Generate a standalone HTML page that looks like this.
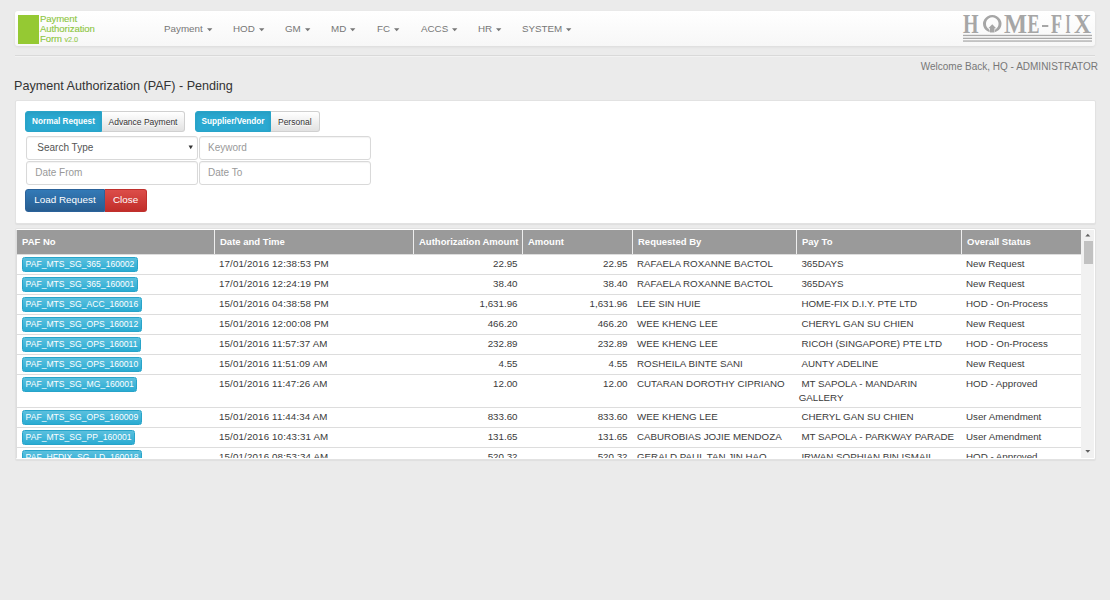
<!DOCTYPE html>
<html><head><meta charset="utf-8">
<style>
*{box-sizing:border-box;margin:0;padding:0}
html,body{width:1110px;height:600px;overflow:hidden;background:#ebebeb;font-family:"Liberation Sans",sans-serif;color:#333}
.a{position:absolute;white-space:nowrap}
.nav{position:absolute;left:15px;top:11px;width:1080px;height:35px;background:linear-gradient(#fff,#f7f7f7);border-radius:3px;box-shadow:0 1px 3px rgba(0,0,0,.07)}
.logo-sq{position:absolute;left:18px;top:15px;width:21px;height:29px;background:#95c933}
.logo-t{position:absolute;left:40px;top:13.7px;font-size:9.6px;line-height:10px;color:#8cc640;letter-spacing:-.1px;-webkit-text-stroke:.1px #8cc640}
.menu span{position:absolute;top:21.5px;font-size:9.8px;color:#777;white-space:nowrap;line-height:14px}
.caret{display:inline-block;margin-left:4.2px;vertical-align:middle;position:relative;top:0.6px}
.hr{position:absolute;left:15px;top:55px;width:1080px;height:1px;background:#d9d9d9;box-shadow:0 1px 0 #f2f2f2}
.welcome{position:absolute;right:12px;top:59.5px;font-size:10px;color:#777;line-height:14px}
h1{position:absolute;left:14px;top:79.2px;font-size:12.6px;line-height:15px;font-weight:normal;color:#333;white-space:nowrap}
.panel{position:absolute;left:14.5px;width:1081px;background:#fff;border-radius:2px;border:1px solid #e2e2e2;box-shadow:0 1px 1px rgba(0,0,0,.05)}
.btn{position:absolute;height:20.5px;line-height:20px;font-size:8.5px;text-align:center;white-space:nowrap;border:1px solid #d0d0d0;color:#333}
.bdef{background:linear-gradient(#fff,#e2e2e2);text-shadow:0 1px 0 #fff}
.binfo{background:#2aa9d1;border-color:#28a4c9;color:#fff;font-weight:bold;font-size:8.2px;box-shadow:inset 0 2px 4px rgba(0,0,0,.08)}
.inp{position:absolute;height:23.5px;border:1px solid #d9d9d9;border-radius:3px;background:#fff;font-size:10px;line-height:22.5px;color:#999;box-shadow:inset 0 1px 1px rgba(0,0,0,.05)}
.bprim{background:linear-gradient(#337ab7,#275d90);border-color:#2b629a;color:#fff;font-size:9.9px;line-height:20.2px;height:23px}
.bdang{background:linear-gradient(#dc4d49,#c12e2a);border-color:#c0302c;color:#fff;font-size:9.9px;line-height:20.2px;height:23px}
.th{position:absolute;top:0;height:24px;background:#9a9a9a;color:#fff;font-weight:bold;font-size:9.5px;line-height:24px;padding-left:5px;white-space:nowrap}
.th.bl{border-left:1px solid #eee}
.tr{position:absolute;left:0;width:1064px;border-top:1px solid #ddd}
.td{position:absolute;padding:3px 5px 0 5px;font-size:9.75px;line-height:14px;white-space:nowrap;color:#3a3a3a}
.td.dt{letter-spacing:.14px}
.td.r{text-align:right;padding-right:4.5px}
.td.p6{padding-left:2.7px}
.pb{display:inline-block;height:15px;line-height:13px;margin-top:0px;padding:0 2.6px;border:1px solid #28a4c9;border-radius:2.5px;background:linear-gradient(#5bc0de,#2aabd2);color:#fff;font-size:8.6px}
.sb{position:absolute;left:1081px;top:230px;width:13px;height:228px;background:#f1f1f1}
</style></head><body>
<div class="nav"></div>
<div class="logo-sq"></div>
<div class="logo-t">Payment<br>Authorization<br>Form <span style="font-size:7.3px;color:#97cc55">v2.0</span></div>
<div class="menu">
<span style="left:164px">Payment<svg class="caret" width="6" height="4"><path d="M0 0.2 L5.4 0.2 L2.7 3.2Z" fill="#777"/></svg></span>
<span style="left:233px">HOD<svg class="caret" width="6" height="4"><path d="M0 0.2 L5.4 0.2 L2.7 3.2Z" fill="#777"/></svg></span>
<span style="left:285px">GM<svg class="caret" width="6" height="4"><path d="M0 0.2 L5.4 0.2 L2.7 3.2Z" fill="#777"/></svg></span>
<span style="left:331px">MD<svg class="caret" width="6" height="4"><path d="M0 0.2 L5.4 0.2 L2.7 3.2Z" fill="#777"/></svg></span>
<span style="left:377px">FC<svg class="caret" width="6" height="4"><path d="M0 0.2 L5.4 0.2 L2.7 3.2Z" fill="#777"/></svg></span>
<span style="left:421px">ACCS<svg class="caret" width="6" height="4"><path d="M0 0.2 L5.4 0.2 L2.7 3.2Z" fill="#777"/></svg></span>
<span style="left:478px">HR<svg class="caret" width="6" height="4"><path d="M0 0.2 L5.4 0.2 L2.7 3.2Z" fill="#777"/></svg></span>
<span style="left:522px">SYSTEM<svg class="caret" width="6" height="4"><path d="M0 0.2 L5.4 0.2 L2.7 3.2Z" fill="#777"/></svg></span>
</div>
<svg class="a" style="left:0;top:0" width="1110" height="50">
<g fill="#a6a6a6" font-family="Liberation Serif" font-size="27.5" font-weight="bold">
<text x="963" y="32.5" textLength="15.5" lengthAdjust="spacingAndGlyphs">H</text>
<text x="1004" y="32.5" textLength="23" lengthAdjust="spacingAndGlyphs">M</text>
<text x="1027.5" y="32.5" textLength="12" lengthAdjust="spacingAndGlyphs">E</text>
<text x="1051" y="32.5" textLength="11" lengthAdjust="spacingAndGlyphs">F</text>
<text x="1065.5" y="32.5" textLength="5" lengthAdjust="spacingAndGlyphs">I</text>
<text x="1074" y="32.5" textLength="17" lengthAdjust="spacingAndGlyphs">X</text>
</g>
<rect x="1042" y="25" width="6.3" height="2" fill="#a6a6a6"/>
<path fill-rule="evenodd" fill="#a6a6a6" d="M992.25 15 A9.25 8.75 0 1 1 992.24 15 Z M992.25 17.3 A6.3 6.5 0 1 0 992.26 17.3 Z"/>
<rect x="989.6" y="28" width="5.3" height="5" fill="#fdfdfd"/>
<path d="M992.25 24.2 L996.2 28.3 L994.5 28.3 L994.5 32.6 L990 32.6 L990 28.3 L988.3 28.3 Z" fill="#a6a6a6"/>
<rect x="963" y="34.8" width="129" height="1.3" fill="#ababab"/>
<rect x="963" y="37.7" width="129" height="1.3" fill="#ababab"/>
<rect x="963" y="40.4" width="129" height="1.3" fill="#ababab"/>
</svg>
<div class="hr"></div>
<div class="welcome">Welcome Back, HQ - ADMINISTRATOR</div>
<h1>Payment Authorization (PAF) - Pending</h1>
<div class="panel" style="top:100px;height:123.5px"></div>
<div class="btn binfo" style="left:25px;top:111px;width:77px;border-radius:3px 0 0 3px">Normal Request</div>
<div class="btn bdef" style="left:102px;top:111px;width:83px;border-radius:0 3px 3px 0;border-left:0">Advance Payment</div>
<div class="btn binfo" style="left:195px;top:111px;width:76px;border-radius:3px 0 0 3px">Supplier/Vendor</div>
<div class="btn bdef" style="left:271px;top:111px;width:48.5px;border-radius:0 3px 3px 0;border-left:0">Personal</div>
<div class="inp" style="left:26px;top:136px;width:172px;color:#555;padding-left:10.3px">Search Type<svg style="position:absolute;left:161.2px;top:8.1px" width="6" height="6"><path d="M0.6 0.4 L4.9 0.4 L2.75 4.2Z" fill="#333"/></svg></div>
<div class="inp" style="left:198.8px;top:136px;width:172.2px;padding-left:8.2px">Keyword</div>
<div class="inp" style="left:26px;top:161px;width:172px;padding-left:8.2px">Date From</div>
<div class="inp" style="left:198.8px;top:161px;width:172.2px;padding-left:8.2px">Date To</div>
<div class="btn bprim" style="left:25px;top:189px;width:80px;border-radius:3px 0 0 3px">Load Request</div>
<div class="btn bdang" style="left:105px;top:189px;width:42px;border-radius:0 3px 3px 0;border-left:0">Close</div>
<div class="panel" style="top:228px;height:232px"></div>
<div class="a" style="left:16px;top:230px;width:1px;height:228px;background:#ddd"></div>
<div class="a" style="left:17px;top:230px;width:1064px;height:228px;overflow:hidden"><div class="th" style="left:0px;width:197px">PAF No</div>
<div class="th bl" style="left:197px;width:199px">Date and Time</div>
<div class="th bl" style="left:396px;width:109px">Authorization Amount</div>
<div class="th bl" style="left:505px;width:110px">Amount</div>
<div class="th bl" style="left:615px;width:164px">Requested By</div>
<div class="th bl" style="left:779px;width:165px">Pay To</div>
<div class="th bl" style="left:944px;width:120px">Overall Status</div>
<div class="tr" style="top:24px;height:20px"></div>
<div class="td" style="left:0px;top:24px;width:197px"><span class="pb">PAF_MTS_SG_365_160002</span></div>
<div class="td dt" style="left:197px;top:24px;width:199px">17/01/2016 12:38:53 PM</div>
<div class="td r" style="left:396px;top:24px;width:109px">22.95</div>
<div class="td r" style="left:505px;top:24px;width:110px">22.95</div>
<div class="td" style="left:615px;top:24px;width:164px">RAFAELA ROXANNE BACTOL</div>
<div class="td p6" style="left:779px;top:24px;width:165px">&nbsp;365DAYS</div>
<div class="td" style="left:944px;top:24px;width:120px">New Request</div>
<div class="tr" style="top:44px;height:20px"></div>
<div class="td" style="left:0px;top:44px;width:197px"><span class="pb">PAF_MTS_SG_365_160001</span></div>
<div class="td dt" style="left:197px;top:44px;width:199px">17/01/2016 12:24:19 PM</div>
<div class="td r" style="left:396px;top:44px;width:109px">38.40</div>
<div class="td r" style="left:505px;top:44px;width:110px">38.40</div>
<div class="td" style="left:615px;top:44px;width:164px">RAFAELA ROXANNE BACTOL</div>
<div class="td p6" style="left:779px;top:44px;width:165px">&nbsp;365DAYS</div>
<div class="td" style="left:944px;top:44px;width:120px">New Request</div>
<div class="tr" style="top:64px;height:20px"></div>
<div class="td" style="left:0px;top:64px;width:197px"><span class="pb">PAF_MTS_SG_ACC_160016</span></div>
<div class="td dt" style="left:197px;top:64px;width:199px">15/01/2016 04:38:58 PM</div>
<div class="td r" style="left:396px;top:64px;width:109px">1,631.96</div>
<div class="td r" style="left:505px;top:64px;width:110px">1,631.96</div>
<div class="td" style="left:615px;top:64px;width:164px">LEE SIN HUIE</div>
<div class="td p6" style="left:779px;top:64px;width:165px">&nbsp;HOME-FIX D.I.Y. PTE LTD</div>
<div class="td" style="left:944px;top:64px;width:120px">HOD - On-Process</div>
<div class="tr" style="top:84px;height:20px"></div>
<div class="td" style="left:0px;top:84px;width:197px"><span class="pb">PAF_MTS_SG_OPS_160012</span></div>
<div class="td dt" style="left:197px;top:84px;width:199px">15/01/2016 12:00:08 PM</div>
<div class="td r" style="left:396px;top:84px;width:109px">466.20</div>
<div class="td r" style="left:505px;top:84px;width:110px">466.20</div>
<div class="td" style="left:615px;top:84px;width:164px">WEE KHENG LEE</div>
<div class="td p6" style="left:779px;top:84px;width:165px">&nbsp;CHERYL GAN SU CHIEN</div>
<div class="td" style="left:944px;top:84px;width:120px">New Request</div>
<div class="tr" style="top:104px;height:20px"></div>
<div class="td" style="left:0px;top:104px;width:197px"><span class="pb">PAF_MTS_SG_OPS_160011</span></div>
<div class="td dt" style="left:197px;top:104px;width:199px">15/01/2016 11:57:37 AM</div>
<div class="td r" style="left:396px;top:104px;width:109px">232.89</div>
<div class="td r" style="left:505px;top:104px;width:110px">232.89</div>
<div class="td" style="left:615px;top:104px;width:164px">WEE KHENG LEE</div>
<div class="td p6" style="left:779px;top:104px;width:165px">&nbsp;RICOH (SINGAPORE) PTE LTD</div>
<div class="td" style="left:944px;top:104px;width:120px">HOD - On-Process</div>
<div class="tr" style="top:124px;height:20px"></div>
<div class="td" style="left:0px;top:124px;width:197px"><span class="pb">PAF_MTS_SG_OPS_160010</span></div>
<div class="td dt" style="left:197px;top:124px;width:199px">15/01/2016 11:51:09 AM</div>
<div class="td r" style="left:396px;top:124px;width:109px">4.55</div>
<div class="td r" style="left:505px;top:124px;width:110px">4.55</div>
<div class="td" style="left:615px;top:124px;width:164px">ROSHEILA BINTE SANI</div>
<div class="td p6" style="left:779px;top:124px;width:165px">&nbsp;AUNTY ADELINE</div>
<div class="td" style="left:944px;top:124px;width:120px">New Request</div>
<div class="tr" style="top:144px;height:33px"></div>
<div class="td" style="left:0px;top:144px;width:197px"><span class="pb">PAF_MTS_SG_MG_160001</span></div>
<div class="td dt" style="left:197px;top:144px;width:199px">15/01/2016 11:47:26 AM</div>
<div class="td r" style="left:396px;top:144px;width:109px">12.00</div>
<div class="td r" style="left:505px;top:144px;width:110px">12.00</div>
<div class="td" style="left:615px;top:144px;width:164px">CUTARAN DOROTHY CIPRIANO</div>
<div class="td p6" style="left:779px;top:144px;width:165px">&nbsp;MT SAPOLA - MANDARIN<br>GALLERY</div>
<div class="td" style="left:944px;top:144px;width:120px">HOD - Approved</div>
<div class="tr" style="top:177px;height:20px"></div>
<div class="td" style="left:0px;top:177px;width:197px"><span class="pb">PAF_MTS_SG_OPS_160009</span></div>
<div class="td dt" style="left:197px;top:177px;width:199px">15/01/2016 11:44:34 AM</div>
<div class="td r" style="left:396px;top:177px;width:109px">833.60</div>
<div class="td r" style="left:505px;top:177px;width:110px">833.60</div>
<div class="td" style="left:615px;top:177px;width:164px">WEE KHENG LEE</div>
<div class="td p6" style="left:779px;top:177px;width:165px">&nbsp;CHERYL GAN SU CHIEN</div>
<div class="td" style="left:944px;top:177px;width:120px">User Amendment</div>
<div class="tr" style="top:197px;height:20px"></div>
<div class="td" style="left:0px;top:197px;width:197px"><span class="pb">PAF_MTS_SG_PP_160001</span></div>
<div class="td dt" style="left:197px;top:197px;width:199px">15/01/2016 10:43:31 AM</div>
<div class="td r" style="left:396px;top:197px;width:109px">131.65</div>
<div class="td r" style="left:505px;top:197px;width:110px">131.65</div>
<div class="td" style="left:615px;top:197px;width:164px">CABUROBIAS JOJIE MENDOZA</div>
<div class="td p6" style="left:779px;top:197px;width:165px">&nbsp;MT SAPOLA - PARKWAY PARADE</div>
<div class="td" style="left:944px;top:197px;width:120px">User Amendment</div>
<div class="tr" style="top:217px;height:20px"></div>
<div class="td" style="left:0px;top:217px;width:197px"><span class="pb">PAF_HFDIX_SG_LD_160018</span></div>
<div class="td dt" style="left:197px;top:217px;width:199px">15/01/2016 08:53:34 AM</div>
<div class="td r" style="left:396px;top:217px;width:109px">520.32</div>
<div class="td r" style="left:505px;top:217px;width:110px">520.32</div>
<div class="td" style="left:615px;top:217px;width:164px">GERALD PAUL TAN JIN HAO</div>
<div class="td p6" style="left:779px;top:217px;width:165px">&nbsp;IRWAN SOPHIAN BIN ISMAIL</div>
<div class="td" style="left:944px;top:217px;width:120px">HOD - Approved</div></div>
<div class="sb"></div>
<div class="a" style="left:1084px;top:241px;width:8.5px;height:23px;background:#c1c1c1"></div>
<svg class="a" style="left:1081px;top:230px" width="13" height="228"><path d="M4.3 6.5 L6.8 3.8 L9.3 6.5Z" fill="#606060"/><path d="M4.3 220 L6.8 222.7 L9.3 220Z" fill="#606060"/></svg>
</body></html>
